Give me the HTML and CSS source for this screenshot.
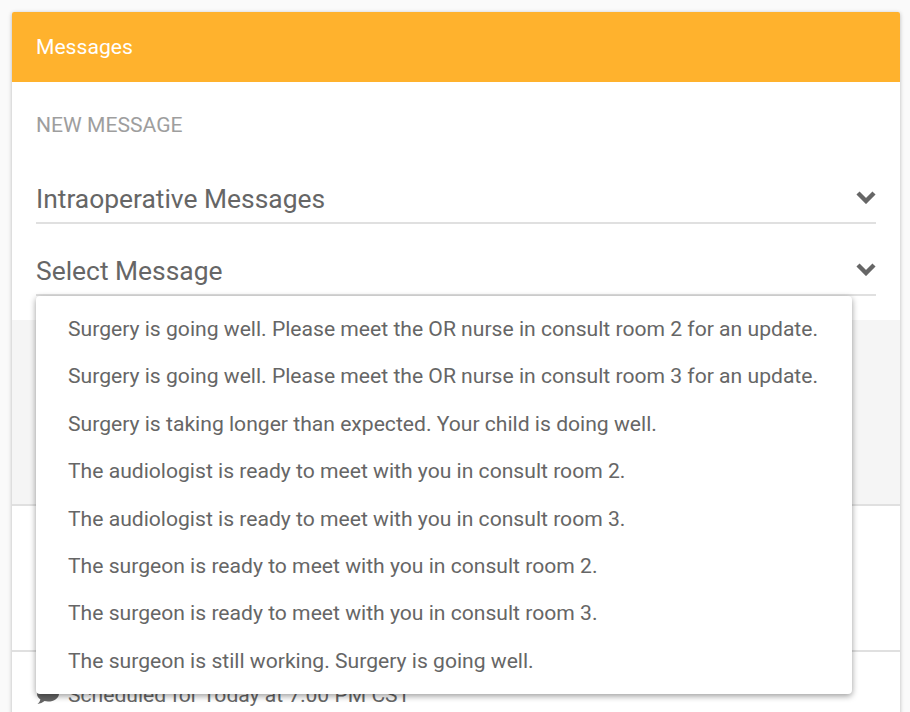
FILE: index.html
```html
<!DOCTYPE html>
<html lang="en">
<head>
  <meta charset="UTF-8">
  <title>Messages</title>
  <link rel="stylesheet" href="styles.css">
</head>
<body>
  <div class="card">
    <div class="card-header">Messages</div>
    <div class="new-message">
      <div class="section-label">NEW MESSAGE</div>
      <div class="select-row">
        <span>Intraoperative Messages</span>
        <svg class="chevron" viewBox="0 0 20 14"><path d="M2 3l8 8 8-8"/></svg>
      </div>
      <div class="select-row select-open">
        <span>Select Message</span>
        <svg class="chevron" viewBox="0 0 20 14"><path d="M2 3l8 8 8-8"/></svg>
        <ul class="dropdown">
          <li>Surgery is going well. Please meet the OR nurse in consult room 2 for an update.</li>
          <li>Surgery is going well. Please meet the OR nurse in consult room 3 for an update.</li>
          <li>Surgery is taking longer than expected. Your child is doing well.</li>
          <li>The audiologist is ready to meet with you in consult room 2.</li>
          <li>The audiologist is ready to meet with you in consult room 3.</li>
          <li>The surgeon is ready to meet with you in consult room 2.</li>
          <li>The surgeon is ready to meet with you in consult room 3.</li>
          <li>The surgeon is still working. Surgery is going well.</li>
        </ul>
      </div>
    </div>
    <div class="grey-section"></div>
    <div class="blank-section"></div>
    <div class="history-row">
      <svg class="chat-icon" viewBox="0 0 24 20"><path d="M12 1C5.700 1 1 4.400 1 8.700c0 2.300 1.300 4.300 3.400 5.700C4 16 3 17.600 1.500 19c2.700-.2 5.200-1.300 7-2.900 1.100.3 2.300.4 3.500.4 6.300 0 11-3.500 11-7.800S18.300 1 12 1z"/></svg>
      <span>Scheduled for Today at 7:00 PM CST</span>
    </div>
  </div>
</body>
</html>
```

FILE: styles.css
```css
html, body { height: 100%; }
body {
  background: #fafafa;
  font-family: Roboto, "Liberation Sans", sans-serif;
  margin: 0;
  overflow: hidden;
}
.card {
  margin: 12px 10px 0 12px;
  background: #fff;
  border-radius: 2px;
  box-shadow: 0 1px 4px #0004;
}
.card-header {
  background: #ffb22d;
  color: #fff;
  font-size: 21.12px;
  line-height: 70px;
  height: 70px;
  padding: 0 24px;
  border-radius: 2px 2px 0 0;
}
.new-message { padding: 0 24px; height: 238px; }
.section-label {
  color: #9e9e9e;
  font-size: 21.12px;
  line-height: 24px;
  padding-top: 31px;
  margin-bottom: 38px;
}
.select-row {
  position: relative;
  display: flex;
  justify-content: space-between;
  align-items: center;
  height: 47px;
  margin-bottom: 23px;
  color: #666;
  font-size: 26.4px;
  border-bottom: 2px solid #e0e0e0;
}
.select-open { margin-bottom: 0; }
.chevron {
  width: 20px;
  height: 14px;
  margin-bottom: 3px;
}
.chevron path {
  fill: none;
  stroke: #666;
  stroke-width: 4.4;
}
.dropdown {
  position: absolute;
  top: 49px;
  left: 0;
  width: 816px;
  margin: 0;
  padding: 9px 0 10px;
  list-style: none;
  background: #fff;
  border-radius: 4px;
  box-shadow: 0 2px 6px #0006;
  z-index: 2;
}
.dropdown li {
  padding: 0 32px;
  height: 47.4px;
  line-height: 47.4px;
  font-size: 21.12px;
  white-space: nowrap;
  color: #666;
}
.grey-section { height: 184px; background: #f5f5f5; }
.blank-section {
  height: 144px;
  border-top: 2px solid #e0e0e0;
  border-bottom: 2px solid #e0e0e0;
}
.history-row {
  display: flex;
  align-items: center;
  gap: 8px;
  padding: 30px 24px 60px;
  color: #666;
  font-size: 21.12px;
}
.chat-icon { width: 24px; height: 20px; fill: #666; }
```
